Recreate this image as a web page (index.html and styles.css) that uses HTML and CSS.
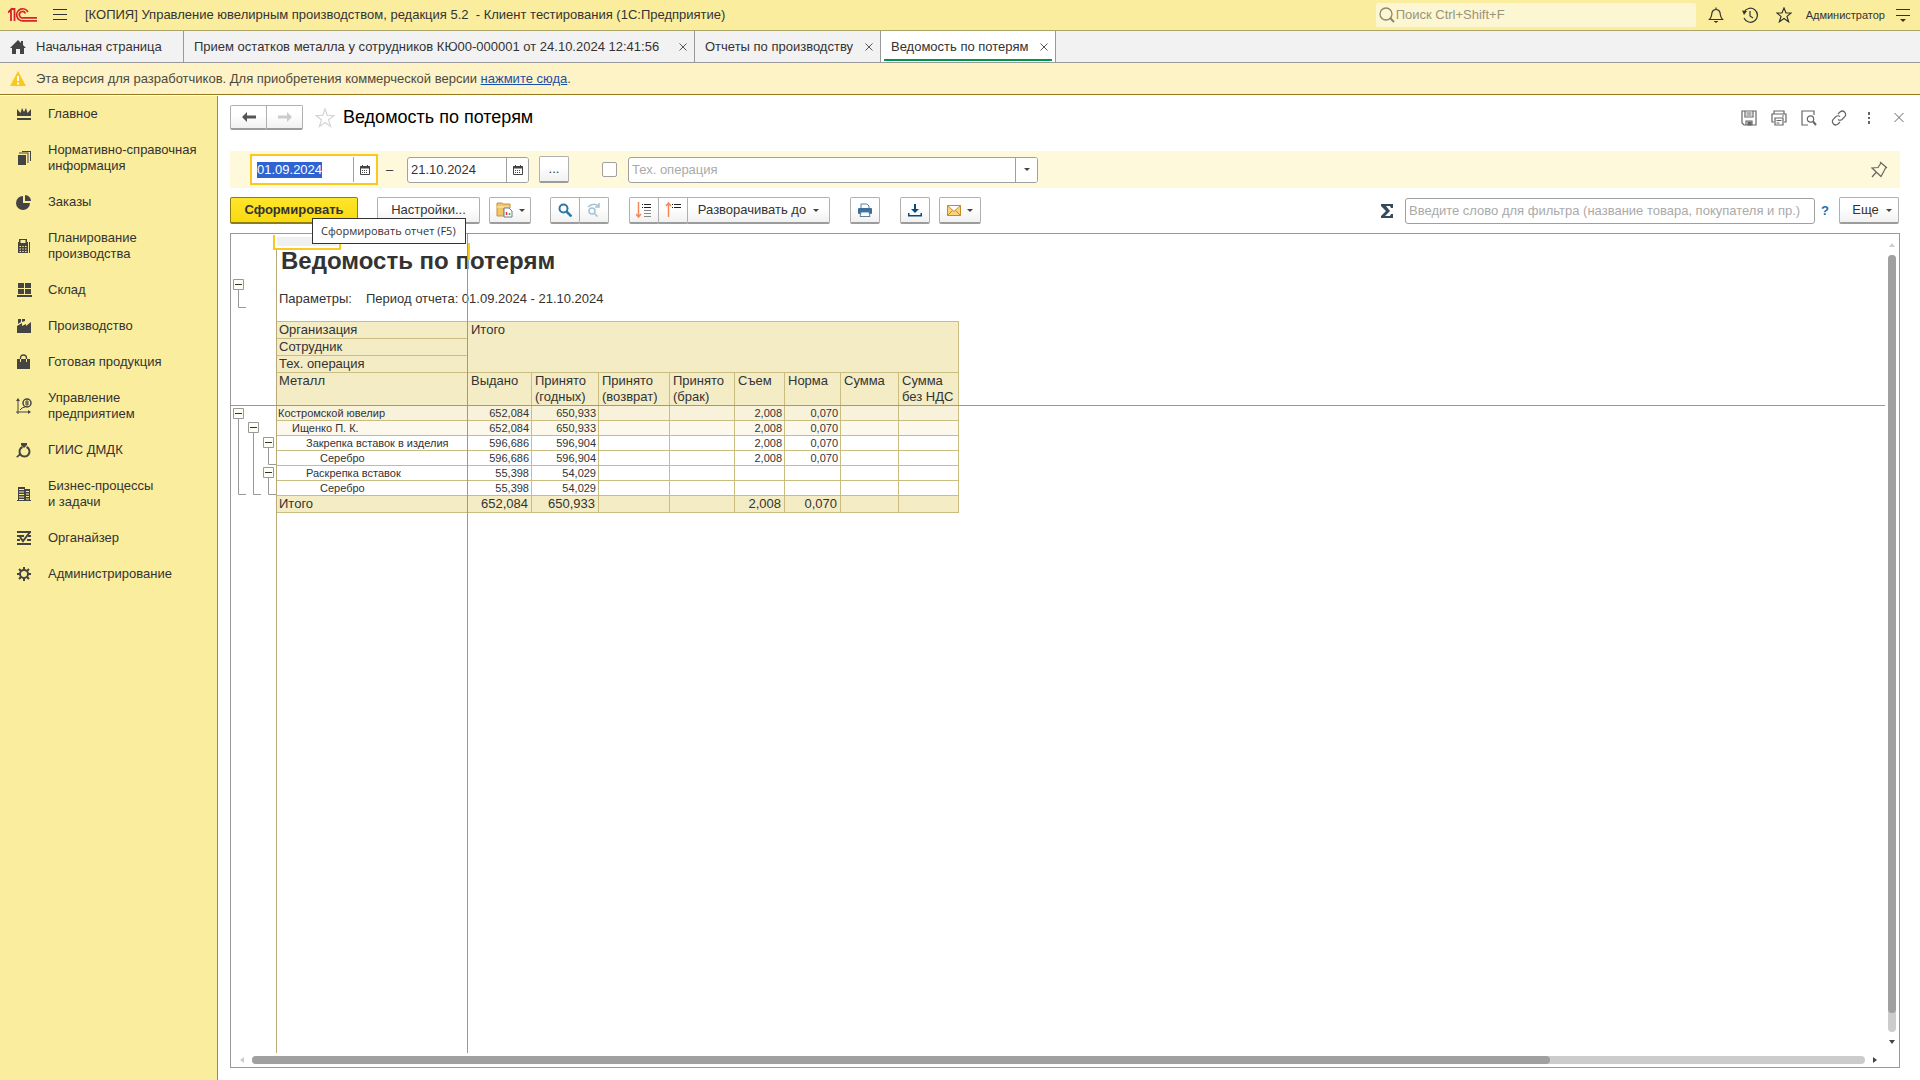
FILE: index.html
```html
<!DOCTYPE html>
<html lang="ru">
<head>
<meta charset="utf-8">
<title>Ведомость по потерям</title>
<link rel="stylesheet" href="styles.css">
</head>
<body>
<header class="titlebar">
  <svg class="logo" width="30" height="16" viewBox="0 0 30 16" fill="none" stroke="#d8232a" stroke-width="2"><path d="M0 5.500L3 2.500V14M3 2h3.500V14" stroke-width="1.800"/><path d="M20 5A6 6 0 1 0 15 13.800H29M17.500 6.500A3.200 3.200 0 1 0 15.500 10.800H29" stroke-width="1.700"/></svg>
  <button class="icon-btn menu" aria-label="Меню"><svg width="14" height="12" viewBox="0 0 14 12" stroke="#333"><path d="M0 .5h14M0 5.500h14M0 10.500h14"/></svg></button>
  <span class="app-title">[КОПИЯ] Управление ювелирным производством, редакция 5.2 &nbsp;- Клиент тестирования (1С:Предприятие)</span>
  <label class="search">
    <svg width="16" height="16" viewBox="0 0 16 16" fill="none" stroke="#8c8767" stroke-width="1.300"><circle cx="7" cy="7" r="6"/><path d="M11 11l4 4" stroke-width="2"/></svg>
    <input type="text" placeholder="Поиск Ctrl+Shift+F" aria-label="Поиск">
  </label>
  <div class="title-tools">
    <button class="icon-btn" aria-label="Оповещения"><svg width="16" height="16" viewBox="0 0 16 16" fill="none" stroke="#333" stroke-width="1.200"><path d="M1.500 12.500C4 10 3.500 8 4 5.500C4.500 3.500 6 2.500 8 2.500S11.500 3.500 12 5.500C12.500 8 12 10 14.500 12.500ZM8 2.500V.5"/><path d="M5.500 14h5L8 16Z" fill="#333" stroke="none"/></svg></button>
    <button class="icon-btn" aria-label="История"><svg width="16" height="16" viewBox="0 0 16 16" fill="none" stroke="#333" stroke-width="1.200"><path d="M2 5.500A7 7 0 1 1 2 11M8 4v5l3 2"/><path d="M0 3.500L5 4 2 8Z" fill="#333" stroke="none"/></svg></button>
    <button class="icon-btn" aria-label="Избранное"><svg width="16" height="16" viewBox="0 0 16 16" fill="none" stroke="#333" stroke-width="1.200"><path d="M8 1l2 5h5.200l-4.200 3.400 1.600 5.400L8 11.600l-4.600 3.200L5 9.400.8 6H6Z"/></svg></button>
    <a class="user" href="#">Администратор</a>
    <button class="icon-btn" aria-label="Настройки окна"><svg width="14" height="14" viewBox="0 0 14 14"><path d="M0 1.500h14M0 7.500h14" stroke="#333"/><path d="M4 11h6l-3 3Z" fill="#333"/></svg></button>
  </div>
</header>

<nav class="tabs">
  <a class="tab home" href="#"><svg width="16" height="14" viewBox="0 0 16 14" fill="#444"><path d="M8 0L0 8h2v6h4V9h4v5h4V8h2L13 5V1h-2v2Z"/></svg>Начальная страница</a>
  <a class="tab document" href="#">Прием остатков металла у сотрудников КЮ00-000001 от 24.10.2024 12:41:56 <svg class="x" viewBox="0 0 8 8"><path d="M.5 .5l7 7M7.500 .5l-7 7"/></svg></a>
  <a class="tab reports" href="#">Отчеты по производству <svg class="x" viewBox="0 0 8 8"><path d="M.5 .5l7 7M7.500 .5l-7 7"/></svg></a>
  <a class="tab active" href="#">Ведомость по потерям <svg class="x" viewBox="0 0 8 8"><path d="M.5 .5l7 7M7.500 .5l-7 7"/></svg></a>
</nav>

<div class="notice">
  <svg width="16" height="15" viewBox="0 0 16 15"><path d="M8 0L16 15H0Z" fill="#fbc81e"/><path d="M8 5v5M8 11.500v2" stroke="#fff" stroke-width="2"/></svg>
  <span>Эта версия для разработчиков. Для приобретения коммерческой версии <a href="#">нажмите сюда</a>.</span>
</div>

<div class="workspace">
  <nav class="sidebar">
    <a href="#"><svg viewBox="0 0 16 16"><path d="M1 3l3.500 4L6 2l2 4 2-4 1.500 5L15 3v7H1ZM1 12h14v2H1Z"/></svg>Главное</a>
    <a href="#"><svg viewBox="0 0 16 16"><path d="M2 5h8v10H2ZM3 2.500h9.500V13h-1V3.500H3ZM6 1h9v10h-1V2H6Z"/></svg>Нормативно-справочная информация</a>
    <a href="#"><svg viewBox="0 0 16 16"><path d="M7 2v7h7A7 7 0 1 1 7 2ZM9 1a6 6 0 0 1 6 6H9Z"/></svg>Заказы</a>
    <a href="#"><svg viewBox="0 0 16 16"><path fill-rule="evenodd" d="M3 4V1h8v3h1v11H2V4ZM4.500 2v3h5V2ZM3.500 8v1H5V8ZM6.300 8v1h1.400V8ZM9 8v1h1.500V8ZM3.500 10.500v1H5v-1ZM6.300 10.500v1h1.400v-1ZM9 10.500v1h1.500v-1ZM3.500 13v1H5v-1ZM6.300 13v1h1.400v-1ZM9 13v1h1.500v-1ZM13 4h1v11h-1Z"/></svg>Планирование производства</a>
    <a href="#"><svg viewBox="0 0 16 16"><path d="M2 1h6v5H2ZM9 1h6v5H9ZM2 7h6v5H2ZM9 7h6v5H9ZM1 13h15v2H1Z"/></svg>Склад</a>
    <a href="#"><svg viewBox="0 0 16 16"><path d="M2 1h3v3L2 6ZM6 1h3v2L6 4ZM1 8l5-3v3l4-2v2l5-4v11H1Z"/></svg>Производство</a>
    <a href="#"><svg viewBox="0 0 16 16"><path d="M1 5h13v10H1Z"/><path d="M4.500 8V4q0-3 3-3t3 3v4" fill="none" stroke="#444" stroke-width="1.300"/><path d="M4.500 5v3M10.500 5v3" stroke="#fbed9e"/></svg>Готовая продукция</a>
    <a href="#"><svg viewBox="0 0 16 16"><path d="M2 16V2M0 14h14M4 12l2-2 3-1" fill="none" stroke="#444"/><path d="M2 0l2 3H0ZM15 14l-3 2v-4Z"/><circle cx="11" cy="5" r="4" fill="none" stroke="#444" stroke-width="1.500"/><path d="M9 4h4M9 6h4M11 2v6" stroke="#444"/></svg>Управление предприятием</a>
    <a href="#"><svg viewBox="0 0 16 16"><path d="M6.500 5A5 5 0 1 0 10.500 5" fill="none" stroke="#444" stroke-width="2"/><path d="M5 1h6v2L8 6 5 3ZM0 15l4-4 1.500 1.500-4 3Z"/></svg>ГИИС ДМДК</a>
    <a href="#"><svg viewBox="0 0 16 16"><path fill-rule="evenodd" d="M2 1h7v2h5v11h1v1H1v-1h1ZM3 3v1h5V3ZM3 5.500v1h5v-1ZM3 8v1h5V8ZM3 10.500v1h5v-1ZM3 13v1h5v-1ZM10 5v1h3V5ZM10 7.500v1h3v-1ZM10 10v1h3v-1ZM10 12.500v1h3v-1Z"/></svg>Бизнес-процессы<br>и задачи</a>
    <a href="#"><svg viewBox="0 0 16 16"><path d="M1 2h14M1 6h7M12 6h3M1 10h3M11 10h4M1 14h14M14 2L7 11 4 7" fill="none" stroke="#444" stroke-width="2"/></svg>Органайзер</a>
    <a href="#"><svg viewBox="0 0 16 16"><circle cx="8" cy="8" r="4" fill="none" stroke="#444" stroke-width="2"/><path d="M8 1v3M8 12v3M1 8h3M12 8h3M3 3l2 2M11 11l2 2M13 3l-2 2M3 13l2-2" stroke="#444" stroke-width="2"/></svg>Администрирование</a>
  </nav>

  <main class="form">
    <div class="form-head">
      <div class="group">
        <button class="btn nav-btn" aria-label="Назад"><svg width="14" height="10" viewBox="0 0 14 10"><path d="M0 5l5-5v3.500h9v3H5V10Z" fill="#555"/></svg></button>
        <button class="btn nav-btn" aria-label="Вперед"><svg width="14" height="10" viewBox="0 0 14 10"><path d="M14 5L9 0v3.500H0v3h9V10Z" fill="#ccc"/></svg></button>
      </div>
      <button class="icon-btn fav" aria-label="В избранное"><svg width="20" height="20" viewBox="0 0 20 20" fill="none" stroke="#d4d4d4" stroke-width="1.200"><path d="M10 1l2.300 6.500H19l-5.400 4.300 2 6.700L10 14.500l-5.600 4 2-6.700L1 7.500h6.700Z"/></svg></button>
      <h1>Ведомость по потерям</h1>
      <div class="head-tools">
        <button class="icon-btn" aria-label="Сохранить"><svg viewBox="0 0 16 16" fill="none" stroke="#666" stroke-width="1.200"><path d="M1 1h14v14H3l-2-2ZM4 1v6h8V1M5.500 3h5M5.500 5h5M5 15v-4h6v4"/><path d="M7 12h3v3H7Z" fill="#666"/></svg></button>
        <button class="icon-btn" aria-label="Печать"><svg viewBox="0 0 16 16" fill="none" stroke="#666" stroke-width="1.200"><path d="M3 4V1h10v3M3 12H1V4h14v8h-2M4 8h8v7H4ZM5.500 10.500h5M5.500 13h3M11 6h2"/></svg></button>
        <button class="icon-btn" aria-label="Просмотр"><svg viewBox="0 0 16 16" fill="none" stroke="#666" stroke-width="1.200"><path d="M7 15H1V1h12v4"/><circle cx="9.500" cy="9" r="3.200"/><path d="M12 11.500l3 3.500" stroke-width="2"/></svg></button>
        <button class="icon-btn" aria-label="Ссылка"><svg viewBox="0 0 16 16" fill="none" stroke="#666" stroke-width="1.200"><path d="M7 4l2-2q2.500-2 4.500 0t.5 4.500l-3 3q-2 1.500-4 0M9 12l-2 2q-2.500 2-4.500 0T2 9.500l3-3q2-1.500 4 0"/></svg></button>
        <button class="icon-btn" aria-label="Ещё действия"><svg viewBox="0 0 16 16" fill="#666"><path d="M7 2h2v3H7ZM7 7h2v2H7ZM7 11h2v3H7Z"/></svg></button>
        <button class="icon-btn" aria-label="Закрыть"><svg viewBox="0 0 16 16" stroke="#666"><path d="M3.500 3l9 9M12.500 3l-9 9"/></svg></button>
      </div>
    </div>

    <div class="filters">
      <div class="focus-ring">
        <div class="field date">
          <input id="from" type="text" value="01.09.2024" aria-label="Начало периода">
          <button aria-label="Выбрать дату"><svg width="10" height="10" viewBox="0 0 10 10"><path d="M.5 1.500h9v8h-9Z" fill="#fff" stroke="#444"/><path d="M0 2.500h10" stroke="#444" stroke-width="2"/><path d="M2.500 0v2M7.500 0v2" stroke="#444"/><path d="M2 5.500h6M2 7.500h6" stroke="#444" stroke-dasharray="1 1"/></svg></button>
        </div>
      </div>
      <span class="dash">–</span>
      <div class="field date">
        <input type="text" value="21.10.2024" aria-label="Конец периода">
        <button aria-label="Выбрать дату"><svg width="10" height="10" viewBox="0 0 10 10"><path d="M.5 1.500h9v8h-9Z" fill="#fff" stroke="#444"/><path d="M0 2.500h10" stroke="#444" stroke-width="2"/><path d="M2.500 0v2M7.500 0v2" stroke="#444"/><path d="M2 5.500h6M2 7.500h6" stroke="#444" stroke-dasharray="1 1"/></svg></button>
      </div>
      <button class="btn dots">...</button>
      <input class="check" type="checkbox" aria-label="Отбор по тех. операции">
      <div class="field operation">
        <input type="text" placeholder="Тех. операция" aria-label="Тех. операция">
        <button aria-label="Открыть список"><i class="caret"></i></button>
      </div>
      <button class="icon-btn pin" aria-label="Закрепить"><svg width="17" height="17" viewBox="0 0 17 17" fill="none" stroke="#666" stroke-width="1.200"><path d="M9 1l7 6M10 2L7 6.500 1 7l9 8.500L13 10l2-4M5 11.500L1 16"/></svg></button>
    </div>

    <div class="toolbar">
      <button class="btn primary">Сформировать<span class="tooltip" role="tooltip">Сформировать отчет (F5)</span></button>
      <button class="btn settings">Настройки...</button>
      <button class="btn combo" aria-label="Варианты отчета"><svg width="17" height="16" viewBox="0 0 17 16"><path d="M1 3V1h5l1 1h7v4H8v8H1Z" fill="#f2c566" stroke="#c89332"/><path d="M1 5h12" stroke="#fff0c5"/><path d="M8 6h5l3 3v6H8Z" fill="#fff" stroke="#667f92"/><path d="M10.500 13v-3" stroke="#d33" stroke-width="1.500"/><path d="M13.500 13v-2" stroke="#3a3" stroke-width="1.500"/></svg><i class="caret"></i></button>
      <div class="group find">
        <button class="btn square" aria-label="Найти"><svg width="14" height="14" viewBox="0 0 14 14" fill="none" stroke="#2f77a8" stroke-width="2"><circle cx="5.500" cy="5.500" r="4"/><path d="M8.500 8.500l5 5" stroke-width="2.500"/></svg></button>
        <button class="btn square" aria-label="Найти далее"><svg width="14" height="14" viewBox="0 0 14 14" fill="none" stroke="#a5c3d4" stroke-width="1.500"><circle cx="5" cy="8" r="3"/><path d="M7.500 10.500l3 3M1 4Q6-1 12 3M12 0v4H8" /></svg></button>
      </div>
      <div class="group">
        <button class="btn square" aria-label="Развернуть"><svg width="16" height="16" viewBox="0 0 16 16"><path d="M2.500 0v15M0 12l2.500 3L5 12" fill="none" stroke="#f58755" stroke-width="1.500"/><path d="M6 2.500h1M8 2.500h7M6 5.500h1M8 5.500h7" stroke="#222"/><path d="M8 8.500h7M8 11.500h7M8 14.500h7" stroke="#888"/></svg></button>
        <button class="btn square" aria-label="Свернуть"><svg width="16" height="16" viewBox="0 0 16 16"><path d="M3.500 15V1M1 4l2.500-3L6 4" fill="none" stroke="#f58755" stroke-width="1.500"/><path d="M7 2.500h1M9 2.500h7M7 5.500h1M9 5.500h7" stroke="#222"/></svg></button>
        <button class="btn expand">Разворачивать до<i class="caret"></i></button>
      </div>
      <button class="btn print" aria-label="Печать"><svg width="14" height="14" viewBox="0 0 14 14"><path d="M3 5V1h6l2 2v2" fill="#fff" stroke="#5d7f9c"/><rect y="5" width="14" height="6" rx="1" fill="#3c6f9a"/><path d="M3 9h8l1 4.500H2Z" fill="#fff" stroke="#5d7f9c"/></svg></button>
      <button class="btn download" aria-label="Сохранить"><svg width="14" height="14" viewBox="0 0 14 14" fill="#08497b"><path d="M6 1h2v5h3L7 10 3 6h3ZM0 10h1.500v2h11v-2H14v3.500H0Z"/></svg></button>
      <button class="btn combo mail" aria-label="Отправить"><svg width="14" height="11" viewBox="0 0 14 11" fill="#fbd27c" stroke="#c98b21"><path d="M.5.5h13v10H.5ZM.5.5L7 6.500 13.500.5M.5 10.500l5-5M13.500 10.500l-5-5"/></svg><i class="caret"></i></button>
      <svg class="sigma" width="12" height="14" viewBox="0 0 12 14"><path d="M0 0h12v4h-2l-1-2H5l4 5-5 5h5l1-2h2v4H0v-2l5-5-5-5Z" fill="#34495a"/></svg>
      <div class="field words"><input type="text" placeholder="Введите слово для фильтра (название товара, покупателя и пр.)" aria-label="Фильтр"></div>
      <a class="help" href="#">?</a>
      <button class="btn more">Еще<i class="caret"></i></button>
    </div>

    <section class="report">
      <div class="viewport">
        <svg class="tree" width="45" height="270" viewBox="0 0 45 270" fill="none" stroke="#999">
          <path d="M7.500 56v17.500H15M7.500 184v76.500H15M22.500 199v61.500H30M37.500 214v16.500H45M37.500 244v16.500H45"/>
          <g fill="#fffef5"><path d="M2.500 45.500h10v10h-10ZM2.500 174.500h10v10h-10ZM17.500 188.500h10v10h-10ZM32.500 203.500h10v10h-10ZM32.500 233.500h10v10h-10Z"/></g>
          <path d="M4 50.500h7M4 179.500h7M19 193.500h7M34 208.500h7M34 238.500h7" stroke="#333"/>
        </svg>
        <div class="sheet">
          <h2>Ведомость по потерям</h2>
          <p class="params"><span>Параметры:</span><span>Период отчета: 01.09.2024 - 21.10.2024</span></p>
          <table>
            <colgroup><col class="c-name"><col class="c-out"><col class="c-good"><col class="c-back"><col class="c-bad"><col class="c-take"><col class="c-norm"><col class="c-sum"><col class="c-net"></colgroup>
            <thead>
              <tr><th>Организация</th><th colspan="8" rowspan="3">Итого</th></tr>
              <tr><th>Сотрудник</th></tr>
              <tr><th>Тех. операция</th></tr>
              <tr class="names"><th>Металл</th><th>Выдано</th><th>Принято (годных)</th><th>Принято (возврат)</th><th>Принято (брак)</th><th>Съем</th><th>Норма</th><th>Сумма</th><th>Сумма без НДС</th></tr>
            </thead>
            <tbody>
              <tr class="l1"><td>Костромской ювелир</td><td>652,084</td><td>650,933</td><td></td><td></td><td>2,008</td><td>0,070</td><td></td><td></td></tr>
              <tr class="l2"><td>Ищенко П. К.</td><td>652,084</td><td>650,933</td><td></td><td></td><td>2,008</td><td>0,070</td><td></td><td></td></tr>
              <tr class="l3"><td>Закрепка вставок в изделия</td><td>596,686</td><td>596,904</td><td></td><td></td><td>2,008</td><td>0,070</td><td></td><td></td></tr>
              <tr class="l4"><td>Серебро</td><td>596,686</td><td>596,904</td><td></td><td></td><td>2,008</td><td>0,070</td><td></td><td></td></tr>
              <tr class="l3"><td>Раскрепка вставок</td><td>55,398</td><td>54,029</td><td></td><td></td><td></td><td></td><td></td><td></td></tr>
              <tr class="l4"><td>Серебро</td><td>55,398</td><td>54,029</td><td></td><td></td><td></td><td></td><td></td><td></td></tr>
            </tbody>
            <tfoot>
              <tr><td>Итого</td><td>652,084</td><td>650,933</td><td></td><td></td><td>2,008</td><td>0,070</td><td></td><td></td></tr>
            </tfoot>
          </table>
        </div>
        <i class="freeze-row"></i>
        <i class="freeze-col"></i>
        <i class="cell-cursor"></i>
        <i class="cell-edge"></i>
      </div>
      <div class="vscroll"><i class="arrow up"></i><div class="track"><div class="thumb"></div></div><i class="arrow down"></i></div>
      <div class="hscroll"><i class="arrow left"></i><div class="track"><div class="thumb"></div></div><i class="arrow right"></i></div>
    </section>
  </main>
</div>
<script src="script.js"></script>
</body>
</html>
```
FILE: styles.css
```css
* { box-sizing: border-box; }

body {
  margin: 0;
  min-height: 100vh;
  display: flex;
  flex-direction: column;
  font: 13px/16px "Liberation Sans", Arial, sans-serif;
  color: #333;
  background: #fff;
}

button, input { font: inherit; color: inherit; }
input { min-width: 0; border: 0; padding: 0; background: none; outline: none; }
input::placeholder { color: #aaa; opacity: 1; }
button { margin: 0; padding: 0; cursor: pointer; }
svg { flex: none; display: block; }

.icon-btn { display: block; border: 0; background: none; }

/* window header */
.titlebar {
  display: flex;
  align-items: center;
  height: 31px;
  padding: 0 10px 0 8px;
  background: #fbed9e;
  border-bottom: 1px solid #aaa468;
}
.menu { margin: 0 18px 0 15px; }
.app-title { flex: 1; white-space: nowrap; }
.search {
  display: flex;
  align-items: center;
  gap: 1px;
  width: 320px;
  height: 24px;
  margin-right: 12px;
  padding-left: 3px;
  border-radius: 2px;
  background: #fdf6d3;
}
.search input { flex: 1; }
.search input::placeholder { color: #99947a; }
.title-tools { display: flex; align-items: center; gap: 18px; }
.user { margin: 0 -7px 0 -4px; font-size: 11px; color: #333; text-decoration: none; }

/* open windows */
.tabs {
  display: flex;
  height: 32px;
  background: #f2f2f2;
  border-bottom: 1px solid #999;
}
.tab {
  display: flex;
  align-items: center;
  justify-content: space-between;
  padding: 0 7px 0 10px;
  border-right: 1px solid #999;
  color: #333;
  text-decoration: none;
  white-space: nowrap;
}
.home { justify-content: flex-start; gap: 10px; min-width: 184px; }
.document { min-width: 511px; }
.reports { min-width: 186px; }
.x { width: 8px; height: 8px; stroke: #555; }
.active {
  min-width: 175px;
  background: linear-gradient(#009646, #009646) center bottom 1px / calc(100% - 6px) 2px no-repeat #fff;
}

.notice {
  display: flex;
  align-items: center;
  gap: 10px;
  height: 32px;
  padding-left: 10px;
  background: #fef2c7;
  border-bottom: 1px solid #94781b;
  color: #4d4a3c;
}
.notice a { color: #1a4fa8; }

.workspace { flex: 1; display: flex; }

/* sections */
.sidebar {
  flex: none;
  width: 218px;
  margin-top: 1px;
  background: #fbed9e;
  border-right: 1px solid #8f8a63;
}
.sidebar a {
  display: flex;
  align-items: center;
  gap: 16px;
  padding: 10px 12px 10px 16px;
  color: #333;
  text-decoration: none;
}
.sidebar svg { width: 16px; height: 16px; fill: #444; }

/* form */
.form {
  flex: 1;
  min-width: 0;
  display: flex;
  flex-direction: column;
  padding: 10px 20px 12px 12px;
}
.form-head { display: flex; align-items: center; height: 25px; margin-bottom: 21px; }
h1 { flex: 1; margin: 0 0 2px; font-size: 18px; line-height: 24px; font-weight: normal; color: #000; }
.fav { margin: 0 8px 0 12px; }
.head-tools { display: flex; gap: 14px; margin-right: -7px; }
.head-tools svg { width: 16px; height: 16px; }

.group { display: flex; }
.group .btn + .btn { margin-left: -1px; border-radius: 0 2px 2px 0; }
.btn {
  display: flex;
  align-items: center;
  justify-content: center;
  gap: 6px;
  height: 27px;
  border: 1px solid #b0b0b0;
  border-bottom: 2px solid #9c9c9c;
  border-radius: 2px;
  background: linear-gradient(#fff 40%, #f1f1f1);
}
.nav-btn { width: 37px; height: 25px; }
.caret {
  border: 3px solid transparent;
  border-top-color: #444;
  border-bottom: 0;
}

.filters {
  display: flex;
  align-items: center;
  height: 37px;
  padding: 0 12px 0 20px;
  background: #fff9db;
}
.field {
  display: flex;
  height: 26px;
  border: 1px solid #a0a0a0;
  border-radius: 3px;
  background: #fff;
  overflow: hidden;
}
.field input { flex: 1; padding-left: 3px; }
.field button {
  display: flex;
  align-items: center;
  justify-content: center;
  width: 22px;
  border: 0;
  border-left: 1px solid #a0a0a0;
  background: #fff;
}
.date { width: 122px; }
.focus-ring { border: 2px solid #fac81e; background: #fff; }
.focus-ring .field { width: 124px; height: 27px; border-color: #fff; }
.focus-ring input { padding-left: 4px; }
#from::selection { background: #2f63d2; color: #fff; }
.dash { width: 29px; text-align: center; padding-right: 6px; }
.dots { width: 30px; margin: 0 33px 0 10px; }
.check {
  appearance: none;
  width: 15px;
  height: 15px;
  margin: 0 11px 0 0;
  border: 1px solid #a0a0a0;
  border-radius: 2px;
  background: #fff;
}
.operation { width: 410px; }
.pin { margin-left: auto; }

.toolbar { display: flex; align-items: center; margin: 9px 0; padding-right: 1px; }
.primary {
  position: relative;
  width: 128px;
  margin-right: 19px;
  border-color: #8f7d13;
  background: linear-gradient(#ffe62a, #f8da10);
  font-weight: bold;
}
.tooltip {
  position: absolute;
  z-index: 2;
  left: 81px;
  top: 20px;
  padding: 3px 9px 4px 8px;
  border: 1px solid #333;
  background: #fff;
  font: 11px/17px "Open Sans", "Noto Sans", sans-serif;
  white-space: nowrap;
}
.settings { width: 103px; margin-right: 9px; }
.combo { width: 42px; }
.find { margin: 0 20px 0 19px; }
.square { width: 30px; }
.expand { width: 143px; gap: 7px; }
.print { width: 30px; margin: 0 20px; }
.download { width: 30px; margin-right: 9px; }
.sigma { margin: 0 12px 0 auto; }
.words { width: 410px; }
.help { width: 24px; padding-left: 6px; color: #1272b8; text-decoration: none; font-weight: bold; }
.more { width: 60px; gap: 7px; padding-left: 6px; }

/* report */
.report {
  flex: 1;
  display: grid;
  grid-template: 1fr 14px / 1fr 14px;
  border: 1px solid #999;
  color: #333;
}
.viewport { position: relative; display: flex; overflow: hidden; }
.sheet { flex: 1; margin-top: 16px; border-left: 1px solid #b8aa78; }
h2 { margin: 0 0 19px 4px; font-size: 24px; line-height: 22px; }
.params { display: flex; gap: 14px; margin: 0 0 14px 2px; }
table { table-layout: fixed; width: 682px; border-collapse: separate; border-spacing: 0; border-top: 1px solid #c9bd82; }
.c-name { width: 191px; }
.c-out { width: 64px; }
.c-good { width: 67px; }
.c-back { width: 71px; }
.c-bad { width: 65px; }
.c-take { width: 50px; }
.c-norm { width: 56px; }
.c-sum { width: 58px; }
.c-net { width: 60px; }
th, td {
  height: 15px;
  padding: 0 2px;
  border: 0 solid #c9bd82;
  border-width: 0 1px 1px 0;
  font-weight: normal;
  text-align: right;
}
th, tfoot td { height: 17px; background: #f4ecc5; }
th { padding-left: 3px; padding-right: 0; text-align: left; vertical-align: top; }
.names th { height: 33px; }
th:first-child, td:first-child { padding-left: 2px; text-align: left; }
tbody td { font-size: 11px; line-height: 14px; }
tfoot td { padding-right: 3px; }
.l1 td { background: #f8f2da; }
.l2 td { background: #fcf9ec; }
tbody .l1 td:first-child { padding-left: 1px; }
tbody .l2 td:first-child { padding-left: 15px; }
tbody .l3 td:first-child { padding-left: 29px; }
tbody .l4 td:first-child { padding-left: 43px; }

.freeze-row, .freeze-col, .cell-cursor, .cell-edge { position: absolute; }
.freeze-row { left: 0; right: 0; top: 171px; height: 1px; background: #999; }
.freeze-col { left: 236px; top: 0; bottom: 0; width: 1px; background: #999; }
.cell-cursor {
  left: 42px;
  top: 1px;
  width: 68px;
  height: 15px;
  border: 2px solid #fac81e;
  border-top: 0;
  background: #f0f0f0;
  box-shadow: inset 0 0 0 2px #fff;
}
.cell-edge { left: 237px; top: 9px; width: 2px; height: 17px; background: #fac81e; }

.vscroll, .hscroll { display: flex; align-items: center; gap: 8px; }
.vscroll { flex-direction: column; padding: 9px 2px 9px 1px; }
.hscroll { padding: 0 8px 0 9px; }
.track { flex: 1; background: #ccc; border-radius: 4px; }
.thumb { background: #a0a0a0; border-radius: 4px; }
.vscroll .track { width: 8px; }
.vscroll .thumb { height: 97.5%; }
.hscroll .track { height: 8px; }
.hscroll .thumb { width: 80.5%; height: 8px; }
.arrow { border: 3px solid transparent; }
.up { border-top: 0; border-bottom: 4px solid #ccc; }
.down { border-bottom: 0; border-top: 4px solid #444; }
.left { border-left: 0; border-right: 4px solid #ccc; }
.right { border-right: 0; border-left: 4px solid #444; }
```
FILE: script.js
```js
const from = document.getElementById('from');
from.focus();
from.select();
```
